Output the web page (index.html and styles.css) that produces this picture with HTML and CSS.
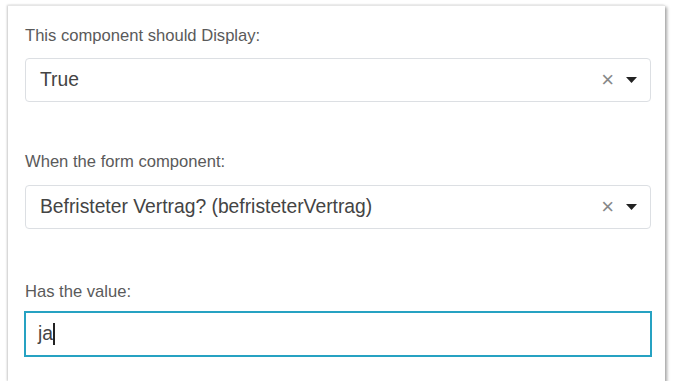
FILE: index.html
```html
<!DOCTYPE html>
<html>
<head>
<meta charset="utf-8">
<link rel="stylesheet" href="styles.css">
</head>
<body>
<div class="card">
  <div class="field">
    <label class="label">This component should Display:</label>
    <div class="select">
      <span class="value">True</span>
      <span class="controls">
        <span class="clear">×</span>
        <svg class="caret" width="11" height="6" viewBox="0 0 11 6"><path d="M0 0H11L5.5 6Z" fill="#222"/></svg>
      </span>
    </div>
  </div>
  <div class="field second">
    <label class="label">When the form component:</label>
    <div class="select">
      <span class="value">Befristeter Vertrag? (befristeterVertrag)</span>
      <span class="controls">
        <span class="clear">×</span>
        <svg class="caret" width="11" height="6" viewBox="0 0 11 6"><path d="M0 0H11L5.5 6Z" fill="#222"/></svg>
      </span>
    </div>
  </div>
  <div class="field third">
    <label class="label">Has the value:</label>
    <div class="input"><span class="value">ja</span><span class="cursor"></span></div>
  </div>
</div>
</body>
</html>
```

FILE: styles.css
```css
html, body {
  margin: 0;
  padding: 0;
  background: #fff;
}
body {
  padding: 5px 0 0 8px;
  font-family: "Liberation Sans", Arial, sans-serif;
}
.card {
  width: 657px;
  height: 376px;
  box-sizing: border-box;
  padding: 19px 14px 0 17px;
  background: #fff;
  border-top: 1px solid #e6e6e6;
  box-shadow: 2px 2px 3px rgba(0,0,0,0.35), -1px 0 2px rgba(0,0,0,0.2);
}
.field {
  display: flex;
  flex-direction: column;
}
.second { margin-top: 49px; }
.third { margin-top: 52px; }
.label {
  font-size: 16.6px;
  line-height: 22px;
  color: #5a5a5a;
  margin-bottom: 11px;
}
.second .label { margin-bottom: 12px; }
.third .label { margin-bottom: 8px; }
.select {
  height: 44px;
  box-sizing: border-box;
  border: 1px solid #dcdfe3;
  border-radius: 4px;
  display: flex;
  align-items: center;
  justify-content: space-between;
  padding: 0 13px 0 14px;
}
.value {
  font-size: 19.3px;
  color: #444;
}
.controls {
  display: flex;
  align-items: center;
  gap: 12px;
}
.clear {
  font-size: 22px;
  color: #888;
  line-height: 1;
}
.caret { display: block; }
.input {
  height: 46px;
  box-sizing: border-box;
  border: 2px solid #26a2c2;
  margin-left: -1px;
  margin-right: -1px;
  display: flex;
  align-items: center;
  padding-left: 12px;
}
.cursor {
  width: 2px;
  height: 22px;
  background: #222;
  margin-left: 0;
}
```
